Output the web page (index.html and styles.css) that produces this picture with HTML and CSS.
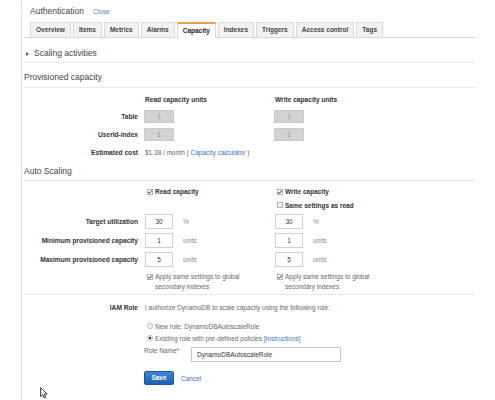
FILE: index.html
```html
<!DOCTYPE html>
<html>
<head>
<meta charset="utf-8">
<link rel="stylesheet" href="styles.css">
</head>
<body>
<div class="page">
  <div class="title"><span class="title-text">Authentication</span><a class="close">Close</a></div>
  <div class="tabs">
    <div class="tab">Overview</div>
    <div class="tab">Items</div>
    <div class="tab">Metrics</div>
    <div class="tab">Alarms</div>
    <div class="tab active">Capacity</div>
    <div class="tab">Indexes</div>
    <div class="tab">Triggers</div>
    <div class="tab">Access control</div>
    <div class="tab">Tags</div>
  </div>
  <div class="section-head scaling"><span class="caret"></span>Scaling activities</div>
  <div class="section-head prov-head">Provisioned capacity</div>

  <div class="row hdr"><span></span><span class="colhead">Read capacity units</span><span class="colhead">Write capacity units</span></div>
  <div class="row r18"><span class="label">Table</span><span><span class="dis">1</span></span><span><span class="dis">1</span></span></div>
  <div class="row r18"><span class="label">UserId-index</span><span><span class="dis">1</span></span><span><span class="dis">1</span></span></div>
  <div class="row r18"><span class="label">Estimated cost</span><span class="text span2">$1.38 / month ( <a class="link">Capacity calculator</a> )</span></div>

  <div class="section-head auto-head">Auto Scaling</div>

  <div class="auto">
    <div class="row c1">
      <span></span>
      <span class="chk"><svg class="cb" viewBox="0 0 8 8"><rect x=".5" y=".5" width="7" height="7" fill="#fff" stroke="#a0a0a0"/><path d="M1.7 4.1 L3.3 5.8 L6.4 2" fill="none" stroke="#222" stroke-width="1.3"/></svg><b>Read capacity</b></span>
      <span class="chk"><svg class="cb" viewBox="0 0 8 8"><rect x=".5" y=".5" width="7" height="7" fill="#fff" stroke="#a0a0a0"/><path d="M1.7 4.1 L3.3 5.8 L6.4 2" fill="none" stroke="#222" stroke-width="1.3"/></svg><b>Write capacity</b></span>
    </div>
    <div class="row c2">
      <span></span>
      <span></span>
      <span class="chk"><svg class="cb" viewBox="0 0 8 8"><rect x=".5" y=".5" width="7" height="7" fill="#f3f3f3" stroke="#a0a0a0"/></svg><b>Same settings as read</b></span>
    </div>
    <div class="row r19">
      <span class="label">Target utilization</span>
      <span class="inp-wrap"><span class="inp">30</span><span class="unit">%</span></span>
      <span class="inp-wrap"><span class="inp">30</span><span class="unit">%</span></span>
    </div>
    <div class="row r19">
      <span class="label">Minimum provisioned capacity</span>
      <span class="inp-wrap"><span class="inp">1</span><span class="unit">units</span></span>
      <span class="inp-wrap"><span class="inp">1</span><span class="unit">units</span></span>
    </div>
    <div class="row r19">
      <span class="label">Maximum provisioned capacity</span>
      <span class="inp-wrap"><span class="inp">5</span><span class="unit">units</span></span>
      <span class="inp-wrap"><span class="inp">5</span><span class="unit">units</span></span>
    </div>
    <div class="row apply">
      <span></span>
      <span class="chk top"><svg class="cb" viewBox="0 0 8 8"><rect x=".5" y=".5" width="7" height="7" fill="#fff" stroke="#a0a0a0"/><path d="M1.7 4.1 L3.3 5.8 L6.4 2" fill="none" stroke="#222" stroke-width="1.3"/></svg><span class="wrap-text">Apply same settings to global secondary indexes</span></span>
      <span class="chk top"><svg class="cb" viewBox="0 0 8 8"><rect x=".5" y=".5" width="7" height="7" fill="#fff" stroke="#a0a0a0"/><path d="M1.7 4.1 L3.3 5.8 L6.4 2" fill="none" stroke="#222" stroke-width="1.3"/></svg><span class="wrap-text">Apply same settings to global secondary indexes</span></span>
    </div>
  </div>

  <div class="iam">
    <div class="row iam-row"><span class="label">IAM Role</span><span class="text span2">I authorize DynamoDB to scale capacity using the following role:</span></div>
    <div class="row radio-row first"><span></span><span class="chk span2"><svg class="cb" viewBox="0 0 8 8"><circle cx="4" cy="4" r="3.4" fill="#f6f6f6" stroke="#a8a8a8"/></svg><span class="text">New role: DynamoDBAutoscaleRole</span></span></div>
    <div class="row radio-row"><span></span><span class="chk span2"><svg class="cb" viewBox="0 0 8 8"><circle cx="4" cy="4" r="3.4" fill="#fff" stroke="#a8a8a8"/><circle cx="4" cy="4" r="1.7" fill="#333"/></svg><span class="text">Existing role with pre-defined policies <a class="link">[Instructions]</a></span></span></div>
    <div class="row role-row"><span></span><span class="role span2"><span class="role-label">Role Name*</span><span class="role-input">DynamoDBAutoscaleRole</span></span></div>
    <div class="row save-row"><span></span><span class="actions span2"><span class="save">Save</span><a class="link cancel">Cancel</a></span></div>
  </div>
</div>
<svg class="cursor" viewBox="0 0 8 12"><path d="M0.6 0.6 L0.6 9.6 L2.8 7.6 L4.3 11 L5.7 10.4 L4.3 7.1 L7.2 7.1 Z" fill="#fff" stroke="#222" stroke-width="0.9" stroke-linejoin="round"/></svg>
</body>
</html>
```

FILE: styles.css
```css
html, body {
  margin: 0;
  padding: 0;
  background: #fff;
  overflow: hidden;
}
body {
  font-family: "Liberation Sans", Arial, Helvetica, sans-serif;
  color: #555;
  height: 400px;
  position: relative;
}
.page {
  margin-left: 21px;
  border-left: 1px solid #dedede;
  height: 400px;
  padding: 0 19px 0 2px;
  box-sizing: border-box;
}
.title {
  height: 22px;
  display: flex;
  align-items: center;
  padding-left: 6px;
}
.title-text {
  font-size: 8.5px;
  color: #444;
  line-height: 10px;
}
.close {
  font-size: 6.6px;
  color: #4a86c8;
  margin-left: 9px;
  margin-top: 1px;
}
.tabs {
  display: flex;
  align-items: flex-start;
  gap: 2px;
  padding-left: 6px;
  height: 15px;
  border-bottom: 1px solid #d8d8d8;
}
.tab {
  box-sizing: border-box;
  height: 15px;
  padding: 0 5px;
  border: 1px solid #dadada;
  border-bottom: none;
  background: #f2f2f2;
  font-size: 6.5px;
  font-weight: bold;
  color: #444;
  line-height: 14px;
}
.tab.active {
  height: 16px;
  margin-bottom: -1px;
  border-top: 2px solid #eba24a;
  background: #fff;
  line-height: 13px;
  color: #222;
}
.section-head {
  box-sizing: border-box;
  display: flex;
  align-items: flex-end;
  font-size: 8.5px;
  line-height: 10px;
  color: #444;
  border-bottom: 1px solid #e9e9e9;
}
.scaling {
  height: 25px;
  padding: 0 0 4px 2px;
  align-items: flex-end;
}
.caret {
  width: 0;
  height: 0;
  border-left: 3px solid #555;
  border-top: 2.5px solid transparent;
  border-bottom: 2.5px solid transparent;
  margin-right: 5px;
  margin-bottom: 2.5px;
}
.prov-head {
  height: 25px;
  padding-bottom: 5px;
}
.auto-head {
  height: 20px;
  padding-bottom: 4px;
}
.row {
  display: grid;
  grid-template-columns: 114px 123px 1fr;
  column-gap: 7px;
  align-items: center;
}
.hdr {
  margin-top: 4px;
  height: 15px;
}
.r18 { height: 18px; }
.r19 { height: 19px; }
.colhead {
  font-size: 6.6px;
  font-weight: bold;
  color: #333;
}
.label {
  text-align: right;
  font-size: 6.6px;
  font-weight: bold;
  color: #333;
  white-space: nowrap;
}
.text {
  font-size: 6.5px;
  color: #666;
  white-space: nowrap;
}
.span2 {
  grid-column: 2 / 4;
}
.link {
  color: #3a76c4;
}
.dis {
  display: block;
  box-sizing: border-box;
  width: 30px;
  height: 13px;
  margin-left: -1px;
  background: #d3d3d3;
  border: 1px solid #c9c9c9;
  font-size: 6.5px;
  line-height: 11px;
  text-align: center;
  color: #999;
}
.auto {
  border-bottom: 1px solid #e9e9e9;
  padding-bottom: 2px;
}
.c1 { margin-top: 4px; height: 13px; }
.c2 { height: 14px; }
.chk {
  display: flex;
  align-items: center;
  font-size: 6.5px;
  color: #333;
  padding-left: 2px;
}
.chk b {
  font-weight: bold;
}
.chk.top {
  align-items: flex-start;
}
.cb {
  width: 6px;
  height: 6px;
  flex: none;
  margin-right: 2px;
}
.chk.top .cb {
  margin-top: 2px;
}
.wrap-text {
  width: 95px;
  line-height: 10px;
  color: #666;
}
.apply {
  margin-top: 3px;
  height: 20px;
  align-items: start;
}
.inp-wrap {
  display: flex;
  align-items: center;
}
.inp {
  box-sizing: border-box;
  width: 28px;
  height: 15px;
  border: 1px solid #cfcfcf;
  background: #fff;
  font-size: 6.5px;
  line-height: 13px;
  text-align: center;
  color: #333;
}
.unit {
  font-size: 6.5px;
  color: #888;
  margin-left: 10px;
}
.iam-row {
  margin-top: 3px;
  height: 19px;
}
.radio-row {
  height: 12px;
}
.radio-row.first {
  margin-top: 3px;
}
.role-row {
  margin-top: 2px;
  height: 16px;
}
.role {
  display: flex;
  align-items: flex-start;
}
.role-label {
  width: 47px;
  margin-left: -1px;
  font-size: 6.5px;
  color: #666;
  line-height: 10px;
}
.role-input {
  box-sizing: border-box;
  width: 150px;
  height: 15px;
  margin-top: 1px;
  border: 1px solid #c4c4c4;
  background: #fff;
  font-size: 6.5px;
  line-height: 13px;
  padding-left: 5px;
  color: #333;
}
.save-row {
  margin-top: 9px;
  height: 14px;
}
.actions {
  display: flex;
  align-items: center;
}
.save {
  box-sizing: border-box;
  width: 30px;
  height: 14px;
  margin-left: -1px;
  background: linear-gradient(#4186d6, #1f60ad);
  border: 1px solid #1b549a;
  border-radius: 2px;
  color: #fff;
  font-size: 6.5px;
  font-weight: bold;
  line-height: 12px;
  text-align: center;
}
.cancel {
  font-size: 6.5px;
  margin-left: 7px;
}
.cursor {
  position: absolute;
  left: 40px;
  top: 387px;
  width: 8px;
  height: 12px;
}
```
